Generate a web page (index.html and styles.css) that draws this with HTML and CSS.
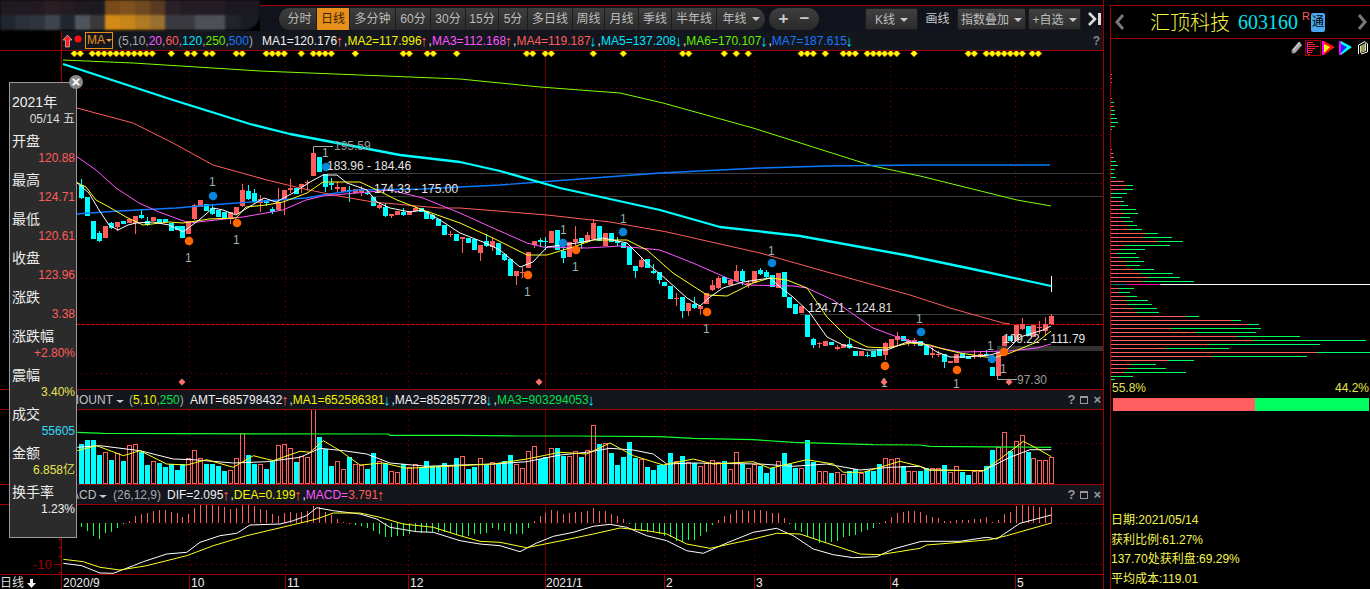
FILE: index.html
```html
<!DOCTYPE html>
<html lang="zh">
<head>
<meta charset="utf-8">
<title>汇顶科技 603160</title>
<link rel="stylesheet" href="styles.css">
</head>
<body>
<div class="app">
  <main class="main">
    <header class="toolbar">
      <div class="mosaic"></div>
      <div class="tools">
        <div class="pill">
          <span class="btn w38">分时</span><span class="btn w33 active">日线</span><span class="btn w46">多分钟</span><span class="btn w35">60分</span><span class="btn w35">30分</span><span class="btn w33">15分</span><span class="btn w29">5分</span><span class="btn w45">多日线</span><span class="btn w32">周线</span><span class="btn w34">月线</span><span class="btn w33">季线</span><span class="btn w45">半年线</span><span class="btn w48 last">年线<i class="caret"></i></span>
        </div>
        <div class="pill zoom"><span class="sym">+</span><span class="sym">−</span></div>
        <span class="square kline">K线<i class="caret"></i></span>
        <span class="plain">画线</span>
        <span class="square overlay-btn">指数叠加<i class="caret"></i></span>
        <span class="square watch">+自选<i class="caret"></i></span>
        <svg class="end-icon" width="14" height="14" viewBox="0 0 14 14"><path d="M1 1l6 6-6 6" fill="none" stroke="#ddd" stroke-width="2.6"/><rect x="10" y="1" width="3" height="12" fill="#ddd"/></svg>
      </div>
    </header>

    <div class="legend">
      <div class="legend-bar">
        <svg class="updown" width="22" height="14" viewBox="0 0 22 14"><path d="M4.500 1L9 6H6.500V13H2.500V6H0z" fill="#ff2020" stroke="#fff" stroke-width=".5"/><circle cx="15" cy="5" r="3.500" fill="#ff1010"/></svg>
        <span class="ma-box">MA<i class="caret orange"></i></span>
        <span class="t-grey params">(5,10,<b class="c-mag">20</b>,<b class="c-red">60</b>,<b class="c-cyan">120</b>,<b class="c-lime">250</b>,<b class="c-blue">500</b>)</span>
        <span class="values"><b class="c-white">MA1=120.176</b><i class="ar c-red">↑</i><b class="c-white">,</b><b class="c-yellow">MA2=117.996</b><i class="ar c-red">↑</i><b class="c-white">,</b><b class="c-mag">MA3=112.168</b><i class="ar c-red">↑</i><b class="c-white">,</b><b class="c-red">MA4=119.187</b><i class="ar c-cyan">↓</i><b class="c-white">,</b><b class="c-cyan">MA5=137.208</b><i class="ar c-cyan">↓</i><b class="c-white">,</b><b class="c-lime">MA6=170.107</b><i class="ar c-cyan">↓</i><b class="c-white">,</b><b class="c-blue">MA7=187.615</b><i class="ar c-cyan">↓</i></span>
        <span class="help">?</span>
      </div>
    </div>

    <svg id="plot-main" class="plot h338" viewBox="0 51 1103 338"></svg>

    <div class="pane-head">
      <div class="pane-bar">
        <span class="c-lgrey name">AMOUNT<i class="caret grey"></i></span>
        <span class="t-grey params2">(<b class="c-yellow">5</b>,<b class="c-yellow">10</b>,<b class="c-green">250</b>)</span>
        <span class="values"><b class="c-white">AMT=685798432</b><i class="ar c-red">↑</i><b class="c-white">,</b><b class="c-yellow">MA1=652586381</b><i class="ar c-cyan">↓</i><b class="c-white">,</b><b class="c-white">MA2=852857728</b><i class="ar c-cyan">↓</i><b class="c-white">,</b><b class="c-green">MA3=903294053</b><i class="ar c-cyan">↓</i></span>
        <span class="win"><b>?</b><i class="win-max"></i><b>×</b></span>
      </div>
    </div>
    <svg id="plot-vol" class="plot h74" viewBox="0 410 1103 74"></svg>

    <div class="pane-head">
      <div class="pane-bar">
        <span class="c-lgrey name-m">MACD<i class="caret grey"></i></span>
        <span class="t-grey params3">(26,12,9)</span>
        <span class="values"><b class="c-white">DIF=2.095</b><i class="ar c-red">↑</i><b class="c-white">,</b><b class="c-yellow">DEA=0.199</b><i class="ar c-red">↑</i><b class="c-white">,</b><b class="c-mag">MACD=</b><b class="c-red">3.791</b><i class="ar c-red">↑</i></span>
        <span class="win"><b>?</b><i class="win-max"></i><b>×</b></span>
      </div>
    </div>
    <svg id="plot-macd" class="plot h69 macd-plot" viewBox="0 505 1103 69"></svg>
    <svg id="plot-axis" class="axis" viewBox="0 574 1103 15"></svg>
  </main>

  <aside class="side">
    <div class="stock-head">
      <svg class="chev left" width="11" height="18" viewBox="0 0 11 18"><path d="M9 2L3 9l6 7" fill="none" stroke="#777" stroke-width="3"/></svg>
      <span class="stock-name">汇顶科技</span>
      <span class="stock-code">603160</span>
      <span class="stock-r">R</span>
      <span class="stock-tong">通</span>
      <svg class="chev right" width="11" height="18" viewBox="0 0 11 18"><path d="M2 2l6 7-6 7" fill="none" stroke="#777" stroke-width="3"/></svg>
    </div>
    <div class="icons">
      <svg width="12" height="13" viewBox="0 0 12 13"><path d="M1 9l7-8 3 3-7 8H1z" fill="#aaa" stroke="#777"/><path d="M2 9l7-8" stroke="#eee"/></svg>
      <svg class="ic-box" width="16" height="16" viewBox="0 0 16 16"><rect x=".5" y=".5" width="15" height="15" fill="#000" stroke="#a00000"/><path d="M2.500 2v12" stroke="#f0f"/><path d="M3 2.500h5M3 4.500h7M3 6.500h11M3 8.500h7M3 10.500h5M3 12.500h4M3 14.500h2" stroke="#f22"/></svg>
      <svg class="ic-flag" width="13" height="14" viewBox="0 0 13 14"><path d="M0 0h2v14H0z" fill="#f0f"/><path d="M2 0l11 6-11 8z" fill="#f11"/><path d="M2 3l6 3-6 6z" fill="#ff0"/></svg>
      <svg class="ic-flag2" width="13" height="14" viewBox="0 0 13 14"><path d="M0 0h2v14H0z" fill="#f0f"/><path d="M2 0l11 6-11 8z" fill="#0ff"/><path d="M2 3l6 3-6 6z" fill="#22f"/></svg>
      <svg class="ic-book" width="10" height="14" viewBox="0 0 10 14"><path d="M.5 13V4L7 .5 9.500 3v8L3 13" fill="#000" stroke="#fff"/><path d="M2 5l6-3v8l-6 2z" fill="#dd8"/><path d="M4 4v7M6 3v7" stroke="#555"/></svg>
    </div>
    <svg id="chips" class="chips" viewBox="1111 56 259 325"></svg>
    <div class="pct-row"><span>55.8%</span><span>44.2%</span></div>
    <div class="ratio"><div class="ratio-red"></div><div class="ratio-green"></div></div>
    <div class="stats">
      <div>日期:2021/05/14</div>
      <div>获利比例:61.27%</div>
      <div>137.70处获利盘:69.29%</div>
      <div>平均成本:119.01</div>
    </div>
  </aside>

  <section class="quote">
    <span class="close">×</span>
    <div class="q-year">2021年</div>
    <div class="q-date">05/14 五</div>
    <div class="q-row"><div class="q-l">开盘</div><div class="q-v c-red">120.88</div></div>
    <div class="q-row"><div class="q-l">最高</div><div class="q-v c-red">124.71</div></div>
    <div class="q-row"><div class="q-l">最低</div><div class="q-v c-red">120.61</div></div>
    <div class="q-row"><div class="q-l">收盘</div><div class="q-v c-red">123.96</div></div>
    <div class="q-row"><div class="q-l">涨跌</div><div class="q-v c-red">3.38</div></div>
    <div class="q-row"><div class="q-l">涨跌幅</div><div class="q-v c-red">+2.80%</div></div>
    <div class="q-row"><div class="q-l">震幅</div><div class="q-v c-y2">3.40%</div></div>
    <div class="q-row"><div class="q-l">成交</div><div class="q-v c-c2">55605</div></div>
    <div class="q-row"><div class="q-l">金额</div><div class="q-v c-y2">6.858亿</div></div>
    <div class="q-row"><div class="q-l">换手率</div><div class="q-v c-white">1.23%</div></div>
  </section>
</div>
<script src="chart.js"></script>
</body>
</html>
```

FILE: styles.css
```css
* { box-sizing: border-box; }
html, body { margin: 0; padding: 0; background: #000; }
.app {
  position: relative; display: flex; width: 1370px; height: 589px; overflow: hidden; background: #000;
  font: 12px "Liberation Sans", "Noto Sans CJK SC", sans-serif; color: #ddd;
}
b { font-weight: 400; }
i { font-style: normal; }
.main { flex: 0 0 1104px; display: flex; flex-direction: column; border-right: 1px solid #a00000; height: 589px; }
.toolbar { display: flex; height: 31px; flex: none; }
.mosaic {
  flex: 0 0 260px; height: 30px; border-radius: 0 0 16px 0; filter: blur(.8px);
  background:
    linear-gradient(to right,#1f1a20 0 15px,#201a22 15px 30px,#221a20 30px 45px,#2a1e24 45px 60px,#241c20 60px 75px,#1e1a20 75px 90px,#1c1a20 90px 105px,#7b4a1a 105px 120px,#80511c 120px 135px,#6f4a20 135px 150px,#5a3a20 150px 165px,#2a2028 165px 180px,#241c24 180px 225px,#1c1820 225px 260px) top/100% 50% no-repeat,
    linear-gradient(to right,#20262e 0 15px,#2c3038 15px 30px,#30343c 30px 45px,#40444c 45px 60px,#22262e 60px 75px,#50545c 75px 90px,#3a3a3a 90px 105px,#d48a18 105px 120px,#c8861a 120px 135px,#b07a22 135px 150px,#9a7030 150px 165px,#3a3a40 165px 195px,#4e5058 195px 225px,#22242c 225px 240px,#1a1c24 240px 260px) bottom/100% 50% no-repeat;
}
.tools {
  flex: 1; margin-top: 5px; border-top: 1px solid #a00000; background: #10131c;
  display: flex; align-items: flex-start; padding: 2px 0 0 19px; height: 26px;
}
.pill {
  display: flex; height: 22px; border-radius: 11px; overflow: hidden;
  background: linear-gradient(#3e3e3e, #2a2a2a); color: #bdbdbd; line-height: 22px; flex: none;
}
.btn { display: block; text-align: center; border-right: 1px solid #1c1c1c; flex: none; }
.btn.last { border-right: 0; }
.w29 { width: 29px; } .w32 { width: 32px; } .w33 { width: 33px; } .w34 { width: 34px; }
.w35 { width: 35px; } .w38 { width: 38px; padding-left: 4px; } .w45 { width: 45px; } .w46 { width: 46px; } .w48 { width: 48px; }
.btn.active { background: #e8901a; color: #3a2400; }
.zoom { width: 50px; margin-left: 4px; justify-content: space-around; padding: 0 4px; }
.sym { font-size: 17px; font-weight: 700; color: #ccc; }
.caret {
  display: inline-block; width: 0; height: 0; margin-left: 5px; vertical-align: 2px;
  border: 4px solid transparent; border-top-color: #c8c8c8; border-bottom-width: 0;
}
.caret.orange { border-width: 3px 3px 0; border-top-color: #f0a030; margin-left: 1px; }
.caret.grey { margin-left: 3px; vertical-align: 1px; border-width: 3px 4px 0; border-top-color: #ccc; }
.square {
  display: block; height: 22px; line-height: 22px; text-align: center; color: #bdbdbd; flex: none;
  background: linear-gradient(#404040, #2c2c2c); border: 1px solid #1c1c1c; border-radius: 2px;
}
.kline { width: 53px; margin-left: 46px; }
.plain { width: 39px; text-align: center; line-height: 22px; color: #ccc; flex: none; }
.overlay-btn { width: 69px; }
.watch { width: 53px; margin-left: 2px; }
.end-icon { margin: 4px 0 0 7px; flex: none; }

.legend, .pane-head { height: 20px; flex: none; border-bottom: 1px solid #a00000; padding-left: 61px; }
.legend-bar, .pane-bar { display: flex; align-items: center; height: 19px; background: #14161d; white-space: nowrap; }
.legend-bar { border-left: 1px solid #a00000; }
.updown { margin-left: 1px; flex: none; }
.ma-box {
  margin-left: 0; width: 28px; height: 17px; line-height: 15px; border: 1px solid #e8901a; color: #e8901a;
  padding-left: 1px; flex: none; white-space: nowrap; overflow: hidden;
}
.params { margin-left: 5px; width: 144px; flex: none; }
.values { flex: none; }
.ar { display: inline-block; width: 7px; font-size: 15px; line-height: 12px; text-align: center; vertical-align: -1px; text-indent: -2px; }
.help { margin-left: auto; margin-right: 3px; color: #888; font-weight: 700; }
.t-grey { color: #a8a8a8; }
.name { width: 68px; flex: none; }
.name-m { width: 52px; flex: none; }
.params2 { width: 61px; flex: none; }
.params3 { width: 54px; flex: none; }
.win { margin-left: auto; display: flex; align-items: center; gap: 5px; padding-right: 2px; color: #999; font-weight: 700; }
.win b { font-weight: 700; font-size: 13px; line-height: 13px; }
.win-max { display: block; width: 8px; height: 8px; border: 1px solid #999; border-top-width: 2px; }

.plot { display: block; flex: none; width: 1103px; }
.h338 { height: 338px; border-bottom: 0; margin-bottom: 1px; }
.h74 { height: 74px; margin-bottom: 1px; }
.h69 { height: 69px; }
.axis { display: block; flex: none; width: 1103px; height: 15px; }
.h338, .h74 { box-shadow: 0 1px 0 #a00000; }

.c-white { color: #f0f0f0; } .c-yellow { color: #f4f400; } .c-mag { color: #ff55ff; } .c-red { color: #ff5c5c; }
.c-cyan { color: #00e4ff; } .c-lime { color: #60f000; } .c-blue { color: #1478ff; } .c-green { color: #00e050; }
.c-lgrey { color: #c0c0c0; } .c-y2 { color: #e4e450; } .c-c2 { color: #30d8ff; }

.side { flex: 0 0 260px; margin: 5px 0 0 6px; height: 584px; border-top: 1px solid #a00000; border-left: 1px solid #a00000; display: flex; flex-direction: column; }
.stock-head { position: relative; flex: none; height: 33px; border-bottom: 1px solid #a00000; display: flex; align-items: center; }
.chev { flex: none; }
.chev.left { margin-left: 3px; }
.chev.right { margin-left: 32px; }
.stock-name { margin-left: 25px; width: 88px; font: 300 20px "Noto Sans CJK SC", sans-serif; color: #f6f640; flex: none; line-height: 32px; }
.stock-code { font: 20px "Liberation Serif", serif; color: #00e0f0; flex: none; }
.stock-r { margin: -12px 0 0 4px; color: #ff5c5c; font-size: 11px; flex: none; }
.stock-tong {
  width: 14px; height: 19px; line-height: 19px; text-align: center; background: #4aa8f0; color: #000; border-radius: 2px;
  font-size: 12px; flex: none; margin: 0 0 0 1px; overflow: hidden;
}
.icons { flex: none; height: 17px; display: flex; align-items: center; justify-content: flex-end; padding: 0 2px 0 0; }
.icons svg { flex: none; }
.ic-box { margin-left: 2px; }
.ic-flag { margin-left: 1px; }
.ic-flag2 { margin-left: 4px; }
.ic-book { margin-left: 6px; }
.chips { display: block; flex: none; width: 259px; height: 325px; }
.pct-row { flex: none; display: flex; justify-content: space-between; height: 15px; line-height: 15px; color: #e4e450; padding: 0 1px; }
.ratio { flex: none; display: flex; height: 13px; margin: 2px 0 0 2px; width: 256px; }
.ratio-red { width: 142px; background: #ff5f5f; }
.ratio-green { flex: 1; background: #00ff60; }
.stats { margin-top: auto; color: #f4f450; line-height: 19.5px; white-space: nowrap; }

.quote {
  position: absolute; left: 9px; top: 82px; width: 68px; height: 456px; padding: 10px 1px 0 2px;
  background: #2b2b2b; border: 1px solid #9a9a9a;
}
.close {
  position: absolute; right: -7px; top: -8px; width: 14px; height: 14px; border-radius: 50%; background: #888;
  color: #fff; text-align: center; line-height: 13px; font-size: 15px; font-weight: 700;
}
.q-year { font-size: 14px; line-height: 18px; color: #eee; }
.q-date { text-align: right; line-height: 17px; font-size: 12px; color: #ddd; margin-bottom: 4px; }
.q-row { height: 39px; }
.q-l { font-size: 14px; line-height: 19px; color: #eee; }
.q-v { text-align: right; line-height: 14px; font-size: 12px; white-space: nowrap; }

.grid { stroke: #8a0000; stroke-width: 1; stroke-dasharray: 1 4; fill: none; }
.solid { stroke: #6a0000; stroke-width: 1; fill: none; }
.ref { stroke: #3c3c3c; stroke-width: 1; }
.refbar { fill: #333; }
.close-line { stroke: #e00000; stroke-dasharray: 4 1; stroke-width: 1; }
.axis-line { stroke: #a00000; stroke-width: 1; }
.up { fill: #ff5c5c; } .dn { fill: #00ffff; }
.wick-up { stroke: #ff5c5c; } .wick-dn { stroke: #00ffff; }
.ln { fill: none; stroke-width: 1; stroke-linejoin: round; }
.ln-w { stroke: #fff; } .ln-y { stroke: #ffff20; } .ln-m { stroke: #ff55ff; } .ln-r { stroke: #ff5c5c; }
.ln-c { stroke: #00ffff; stroke-width: 2.3; } .ln-l { stroke: #80ff00; } .ln-b { stroke: #0a78ff; stroke-width: 1.4; } .ln-g { stroke: #10ff30; stroke-width: 1.2; }
.vol-up { fill: none; stroke: #ff5c5c; } .vol-dn { fill: #00ffff; }
.macd-up { stroke: #ff5c5c; } .macd-dn { stroke: #10ff50; }
.dia { fill: #ffff00; stroke: #c86000; stroke-width: .6; }
.dia-r { fill: #ff7070; }
.dot-b { fill: #0a84d8; } .dot-o { fill: #ff6600; }
.mk { fill: #9ab4b4; font: 12px "Liberation Sans", sans-serif; }
.tag { fill: #e4e4e4; font: 12px "Liberation Sans", sans-serif; }
.tag-g { fill: #9a9a9a; font: 12px "Liberation Sans", sans-serif; }
.brk { stroke: #a8a8a8; fill: none; }
.end-mark { stroke: #fff; }
.neg { fill: #a00000; font: 13px "Liberation Sans", sans-serif; }
.ax { fill: #eee; font: 12px "Liberation Sans", sans-serif; }
.ax-cn { fill: #ddd; font: 12px "Noto Sans CJK SC", sans-serif; }
.chip-r { stroke: #ff5c5c; } .chip-g { stroke: #00ff60; }
.chip-t { stroke: #087070; } .chip-m { stroke: #ff0090; } .chip-w { stroke: #fff; }
```

FILE: chart.js
```js
var V1=[[244,'c',165],[262,'c',153],[280,'c',153],[298,'c',198],[316,'r',190],[334,'c',213],[352,'r',192],[370,'c',216],[388,'r',168],[406,'r',165],[424,'c',190],[442,'c',228],[460,'r',216],[478,'c',222],[496,'c',233],[514,'c',226],[530,'c',242],[548,'c',226],[566,'r',208],[584,'r',184],[602,'r',208],[620,'c',225],[638,'c',225],[656,'c',230],[674,'c',245],[692,'r',243],[710,'r',208],[728,'r',133],[746,'c',198],[764,'c',225],[782,'r',226],[800,'c',240],[818,'c',215],[836,'r',168],[854,'r',165],[872,'r',178],[890,'c',218],[908,'r',200],[926,'r',203],[942,'r',60],[960,'c',145],[978,'c',180],[996,'c',231],[1014,'r',216],[1032,'r',240],[1050,'c',204],[1068,'r',225],[1086,'r',228],[1104,'c',240],[1122,'c',192],[1140,'r',215],[1158,'c',222],[1176,'r',246],[1194,'r',249],[1212,'c',225],[1230,'r',235],[1248,'r',226],[1262,'c',233],[1280,'c',215],[1298,'c',231],[1316,'c',231],[1334,'c',222],[1352,'r',228],[1370,'c',207]];
var V2=['r202','c240','c233','r208','c225','r220','c225','c215','c198','r225','r238','r187','r172','c210','c205','r178','c177','c200','r200','r187','c204','r184','r108','c165','r163','c192','c228','c204','c159','c208','r210','c234','c243','c228','c228','c192','r215','c201','r220','c222','r232','r223','r214','r220','c217','r240','r190','c225','r238','r224','c232','c252','c238','r217','c192','c226','c238','r238','c153','c220','r247','r247','c253','r249','r256','c246','c240','r252','c246','c245','c225','r208','r211','r208','c232','r247',
'r247','c246','c238','r238','r238','c228','r250','r232','c250','c258','r247','r247','c232','c183','r175','r130','c185','r157','r138','c188','r207','r213','r213','r203'];
var vols=V1.map(function(a){return {t:a[1],y:389+a[2]/3};}).concat(V2.map(function(s){return {t:s[0],y:389+(+s.slice(1))/3};}));
var C=[[185,198,179],[197,216],[221,239],[233,241,231],[226,238],[223,228,222],[222,227,222,230],[221,224],[219,223],[216,223,216,233],[215,218,209],[221,225,217],[217,221],[219,223],[219,222],[223,231],[226,230],[226,238],[221,234],[205,219,204],[200,207],[204,211],[208,214,204],[210,217],[212,219],[212,219,212,223],[207,214],[190,206,184],[191,199,185],[193,202,189],[199,203,195,211],[200,203,200,205],[209,212,207,213],[202,210,188],[190,199,190,214],[188,190,179,192],[188,194],[184,187,184,192],[182,183,180,190],[153,176],[157,172],[174,187,174,191],[183,185,178,189],[187,189,182,191],[187,192],[190,191,186,201],[189,193],[189,192,186,195],[193,194,189],[197,206],[205,208,202],[207,216,203],[214,216,214,217],[211,215],[212,215,208],[211,215],[208,211,206],[208,212],[211,219],[215,219,214],[219,226],[225,235],[234,235,231,236],[234,241],[237,239,237,252],[238,243],[239,250],[245,253,245,260],[241,246,234],[241,247,238,250],[243,255],[254,260,253],[259,276],[271,276,271,284],[272,273,267,277],[252,268],[241,245,241,247],[240,242,238,245],[241,242,237,249],[231,243],[230,250],[251,258,248,262],[242,257],[239,242,226,249],[238,243,238,248],[235,242,232],[223,239,219],[226,241],[233,246],[233,242],[241,243,237,245],[243,248],[247,265],[266,271,266,277],[260,267,257],[259,268],[271,273,264],[272,280,272,283],[282,286],[286,299],[298,299,293,305],[297,311,297,317],[303,311,303,315],[304,308,297],[306,309,306,314],[293,304],[285,290,280],[278,288,276],[277,283,276],[280,285],[271,281,265],[271,281,269,284],[283,285,280,287],[271,283],[270,274,268],[272,277,270],[275,287],[273,288],[272,297],[297,308],[304,314],[306,313],[315,337],[339,345,338,347],[343,344,342,347],[341,346],[342,345],[347,349,345],[344,348],[344,348,339],[351,356],[351,356],[355,356,352],[351,357],[349,356],[343,355,342,359],[339,348],[336,340,332,345],[336,341],[340,343,339,345],[340,343,338,345],[341,346],[345,355],[353,355,347,357],[354,355,351,356],[354,362,354,367],[361,363],[354,363],[353,358],[356,359],[355,356,350,358],[354,357,351],[354,355,350],[367,376],[352,376],[336,346],[336,341],[325,341],[324,329,318],[326,336],[325,337],[327,328,321,333],[324,331,317,335],[316,324,314]];
function X(i){return Math.round(81.3+5.951*i);}
function pl(pts,cls){return '<polyline class="ln '+cls+'" points="'+pts.map(function(p){return p[0]+','+p[1];}).join(' ')+'"/>';}
function zp(ox,oy,a){return a.map(function(p){return [+(ox+p[0]/3).toFixed(1),+(oy+p[1]/3).toFixed(1)];});}
function hline(y,x1,x2,cls){return '<line class="'+cls+'" x1="'+x1+'" x2="'+x2+'" y1="'+(y+.5)+'" y2="'+(y+.5)+'"/>';}
function vline(x,y1,y2,cls){return '<line class="'+cls+'" x1="'+(x+.5)+'" x2="'+(x+.5)+'" y1="'+y1+'" y2="'+y2+'"/>';}
var months=[189,285,408,545,664,754,890,1015];
function verticals(y1,y2){var s=vline(61,y1,y2,'axis-line');months.forEach(function(x){s+=vline(x,y1,y2,x===545?'solid':'grid');});return s;}
function txt(x,y,t,cls){return '<text class="'+cls+'" x="'+x+'" y="'+y+'">'+t+'</text>';}

/* main */
var s=verticals(51,389);
[88,135,183,230,278,373].forEach(function(y){s+=hline(y,61,1103,'grid');});
s+=hline(173,327,1103,'ref')+hline(196,370,1103,'ref')+hline(314,800,1103,'ref');
s+='<rect class="refbar" x="997" y="346" width="106" height="5"/>';
s+=hline(324,61,1103,'close-line');
[223,241,277,295,313,331,349,367,385,403,421,439,457,514,562,583,619,637,709,727,799,817,835,853,904,940,958,976,994,1066,1210,1228,1282,1300].forEach(function(z){var x=z/3;s+='<path class="dia" d="M'+x+' 50l3.500 3.500-3.500 3.500-3.500-3.500z"/>';});
[1370].concat([]).forEach(function(z){var x=z/3;s+='<path class="dia" d="M'+x+' 50l3.500 3.500-3.500 3.500-3.500-3.500z"/>';});
[200,218,256,274,400,490,668,686,793,829,865,1024,1042,1060,1096,1150,1168,1186,1222,1240,1258,1274,1292,1310,1362].forEach(function(z){var x=460+z/3;s+='<path class="dia" d="M'+x+' 50l3.500 3.500-3.500 3.500-3.500-3.500z"/>';});
[175,193,229,247,265,283,301,319,337,367,385].forEach(function(z){var x=910+z/3;s+='<path class="dia" d="M'+x+' 50l3.500 3.500-3.500 3.500-3.500-3.500z"/>';});
C.forEach(function(c,i){
  var x=X(i),u=vols[i].t==='r',h=c[2]||c[0],l=c[3]||c[1];
  if(h<c[0]||l>c[1])s+=vline(x,h,l+1,u?'wick-up':'wick-dn');
  s+='<rect class="'+(u?'up':'dn')+'" x="'+(x-2)+'" y="'+c[0]+'" width="5" height="'+Math.max(1,c[1]-c[0])+'"/>';
});
s+=pl([[63,60],[133,63],[260,71],[460,79],[540,87],[620,93],[663,103],[753,128],[873,166],[920,176],[1017,200],[1051,206]],'ln-l');
s+=pl([[76,214],[119,211],[176,208],[223,204],[306,198],[323,195],[357,190],[423,189],[460,187],[500,185],[540,182],[660,173],[760,168],[827,166],[920,165],[1050,165]],'ln-b');
s+=pl([[77,108],[133,123],[173,143],[213,165],[267,180],[300,188],[333,195],[373,202],[440,208],[460,208],[547,215],[610,222],[667,232],[760,253],[827,272],[910,295],[950,308],[1003,323],[1010,324]],'ln-r');
s+=pl([[76,156],[96,170],[116,188],[139,203],[159,212],[189,223],[216,220],[243,217],[283,210],[306,200],[323,196],[357,193],[390,190],[423,198],[460,213],[493,228],[527,243],[543,247],[587,248],[620,246],[660,250],[693,263],[727,278],[747,285],[793,286],[807,288],[833,300],[873,328],[900,338],[930,346],[960,352],[1010,351],[1037,348],[1051,344]],'ln-m');
s+=pl([[76,182],[86,187],[96,200],[109,207],[126,217],[143,225],[169,222],[183,223],[209,219],[236,218],[246,207],[266,205],[283,202],[307,193],[323,182],[360,182],[377,190],[397,200],[423,210],[460,223],[493,238],[527,255],[547,255],[573,247],[593,240],[627,240],[647,250],[673,273],[707,295],[727,296],[753,283],[770,278],[787,280],[807,288],[827,317],[847,337],[867,347],[887,348],[910,343],[930,345],[943,349],[960,353],[993,358],[1010,353],[1037,342],[1051,331]],'ln-y');
s+=pl([[76,182],[89,193],[99,210],[109,225],[118,230],[128,225],[136,223],[153,222],[169,225],[183,232],[199,220],[213,208],[223,210],[236,215],[249,207],[264,198],[276,202],[293,193],[310,182],[323,175],[337,175],[347,183],[367,190],[377,202],[390,208],[410,212],[423,210],[440,220],[460,233],[483,242],[500,250],[520,267],[533,262],[547,247],[577,243],[603,238],[627,243],[647,263],[667,280],[687,298],[700,306],[710,297],[723,288],[743,282],[770,278],[780,287],[793,297],[810,313],[827,337],[843,345],[867,350],[887,350],[907,342],[923,343],[937,352],[950,357],[967,357],[990,355],[1007,350],[1020,337],[1043,330],[1051,326]],'ln-w');
s+=pl([[63,64],[173,100],[250,124],[290,134],[400,155],[460,162],[500,171],[560,188],[610,199],[660,210],[720,227],[800,236],[910,256],[977,270],[1051,286]],'ln-c');
s+=vline(1051,276,292,'end-mark');
[[213,196,212,186],[326,167,325,157],[563,243,563,234],[623,232,623,223],[772,263,771,255],[921,332,919,323],[992,359,990,350]].forEach(function(d){s+='<circle class="dot-b" cx="'+d[0]+'" cy="'+d[1]+'" r="4.300"/>'+txt(d[2]-3,d[3],'1','mk');});
[[189,241,188,262],[237,223,236,244],[528,275,527,296],[576,250,575,271],[707,312,706,333],[885,366,884,387],[957,370,956,388],[1004,352,1003,373]].forEach(function(d){s+='<circle class="dot-o" cx="'+d[0]+'" cy="'+d[1]+'" r="4.300"/>'+txt(d[2]-3,d[3],'1','mk');});
[[182,382],[539,382],[884,382],[1009,382]].forEach(function(d){s+='<path class="dia-r" d="M'+d[0]+' '+(d[1]-3.5)+'l3.500 3.500-3.500 3.500-3.500-3.500z"/>';});
s+='<path class="brk" d="M313.500 153V146.500H333"/>'+txt(334,150,'195.59','tag-g');
s+=txt(327,170,'183.96 - 184.46','tag');
s+=txt(374,193,'174.33 - 175.00','tag');
s+=txt(808,312,'124.71 - 124.81','tag');
s+=txt(1003,343,'109.22 - 111.79','tag');
s+='<path class="brk" d="M997.500 370V379.500H1017"/>'+txt(1017,384,'97.30','tag-g');
document.getElementById('plot-main').innerHTML=s;

/* volume */
s=verticals(410,484)+hline(443,61,1103,'grid');
vols.forEach(function(v,i){
  var x=X(i),y=Math.round(v.y);
  if(v.t==='r')s+='<rect class="vol-up" x="'+(x-1.5)+'" y="'+(y+.5)+'" width="4" height="'+(483-y)+'"/>';
  else s+='<rect class="vol-dn" x="'+(x-2)+'" y="'+y+'" width="5" height="'+(484-y)+'"/>';
});
s+=pl(zp(0,389,[[232,130],[310,133],[540,134],[1165,135],[1170,139],[1380,139]]).concat(zp(460,389,[[180,141],[340,141],[600,143],[700,148],[880,152],[1000,160],[1240,167],[1380,168]]),zp(910,389,[[60,172],[424,175]])),'ln-g');
s+=pl(zp(0,389,[[232,175],[300,170],[420,185],[520,210],[580,212],[700,222],[800,218],[900,205],[960,178],[1030,185],[1100,195],[1170,222],[1280,232],[1380,228]]).concat(zp(460,389,[[100,225],[200,218],[300,198],[380,190],[450,178],[520,183],[580,195],[620,225],[700,222],[900,225],[1000,232],[1100,225],[1200,243],[1290,235],[1380,232]]),zp(910,389,[[60,243],[220,245],[300,205],[360,182],[424,182]])),'ln-w');
s+=pl(zp(0,389,[[232,185],[290,170],[370,200],[420,185],[500,225],[560,228],[620,212],[700,235],[760,200],[820,215],[900,187],[930,190],[970,155],[1020,185],[1080,228],[1150,222],[1220,238],[1380,230]]).concat(zp(460,389,[[100,225],[200,210],[300,190],[380,195],[450,162],[520,200],[610,228],[700,210],[760,225],[880,218],[930,238],[1040,212],[1120,225],[1150,250],[1210,250],[1320,217],[1380,232]]),zp(910,389,[[50,243],[220,245],[270,210],[340,157],[380,178],[424,203]])),'ln-y');
document.getElementById('plot-vol').innerHTML=s;

/* macd */
var H=[415,425,442,450,432,430,418,406,395,380,375,372,365,363,362,370,373,385,375,357,346,346,348,352,354,360,358,346,346,350,360,363,375,380,372,368,372,368,366,352,354,370,378,390,398,403,408,410,418,425,435,445,445,440,440,435,430,432,430,430,430,430,432,438,
440,440,436,436,433,418,424,426,436,436,434,416,397,380,372,362,365,375,372,370,368,366,358,365,367,376,380,390,406,422,427,430,430,436,440,444,455,460,453,452,442,428,408,392,380,374,364,362,365,363,363,365,372,372,388,404,422,430,440,450,462,462,458,455,445,440,438,428,424,416,406,396,385,372,370,366,
366,368,378,385,388,396,395,393,392,392,390,390,385,398,392,375,368,352,348,352,352,355,358,353];
s=verticals(505,574)+hline(523,61,1103,'grid')+hline(564,61,1103,'grid');
H.forEach(function(z,i){
  var y=Math.round(389+z/3),x=X(i);
  if(y<523)s+=vline(x,y,523,'macd-up');else if(y>523)s+=vline(x,523,y,'macd-dn');else s+=vline(x,523,524,'macd-up');
});
s+=pl(zp(0,389,[[190,523],[245,530],[300,552],[340,553],[400,530],[430,518],[500,495],[560,490],[600,460],[660,440],[710,433],[750,408],[840,405],[880,395],[920,380],[950,356],[1000,365],[1080,375],[1130,390],[1170,415],[1250,428],[1300,430],[1380,455]]).concat(zp(460,389,[[60,465],[120,470],[180,488],[230,462],[280,442],[340,430],[400,412],[450,406],[500,415],[560,440],[620,455],[680,485],[730,493],[800,462],[880,430],[950,418],[1000,440],[1060,480],[1120,497],[1180,506],[1250,503],[1300,480],[1380,458]]),zp(910,389,[[40,457],[150,457],[230,445],[260,450],[330,403],[424,378]])),'ln-w');
s+=pl(zp(0,389,[[190,511],[250,518],[300,535],[360,543],[440,530],[560,500],[640,470],[740,440],[880,407],[950,390],[1000,372],[1080,372],[1140,385],[1210,405],[1300,415],[1380,440]]).concat(zp(460,389,[[60,457],[120,460],[200,476],[300,456],[400,435],[480,417],[560,425],[620,435],[680,465],[750,478],[880,450],[950,433],[1020,435],[1100,462],[1200,495],[1260,497],[1380,478]]),zp(910,389,[[50,468],[150,460],[240,452],[290,440],[424,402]])),'ln-y');
[539,547,556,564,572].forEach(function(y){s+=hline(y,y===564?54:58,61,'axis-line');});
s+=txt(33,569,'-10','neg');
document.getElementById('plot-macd').innerHTML=s;

/* axis */
s=hline(574,0,1103,'axis-line')+vline(61,575,589,'axis-line');
months.forEach(function(x){s+=vline(x,575,589,'axis-line');});
s+=txt(0,587,'日线','ax-cn')+'<path class="ax" d="M30 579h3v4h3l-4.500 5-4.500-5h3z"/>';
[[63,'2020/9'],[191,'10'],[287,'11'],[410,'12'],[546,'2021/1'],[666,'2'],[756,'3'],[892,'4'],[1017,'5']].forEach(function(m){s+=txt(m[0],587,m[1],'ax');});
document.getElementById('plot-axis').innerHTML=s;

/* chips: [zoomY, redEnd, greenEnd] in zoom coordinates */
var up=[[222,606,606],[234,606,606],[246,606,606],[295,606,606],[307,603,612],[319,612,612],[331,603,615],[343,603,615],[355,603,621],[367,603,624],[379,603,615],[388,603,606],[448,606,606],[460,610,610],[472,612,612],[484,603,618],[496,603,624],[508,603,615],[520,603,612],[532,603,618],[544,642,642],[556,651,669],[568,642,669],[580,603,651],[592,603,636]];
var lo=[[4,633,642],[16,632,654],[28,630,678],[40,642,684],[52,630,660],[64,642,669],[76,654,681],[88,660,696],[100,708,744],[112,702,786],[124,741,819],[136,645,780],[148,633,705],[160,621,678],[172,627,687],[184,648,702],[196,648,690],[208,672,732],[220,693,789],[232,714,810],[244,699,852],[265,627,672],[277,627,660],[289,651,681],[301,648,714],[313,654,726],[325,672,741],[337,681,747],[349,828,867],[361,966,993],[373,1014,1047],[385,783,1053],[397,858,1038],[409,981,1170],[421,1029,1368],[433,897,1230],[445,768,957],[457,1221,1380],[469,909,1191],[481,774,852],[493,663,738],[505,654,768],[517,642,828],[529,603,669],[538,603,615]];
s='';
function chip(a,oy){a.forEach(function(r){
  var y=Math.floor(oy+r[0]/3),x1=910+r[1]/3,x2=910+r[2]/3;
  if(r[1]>603)s+=hline(y,1111,x1,'chip-r');
  if(r[2]>r[1])s+=hline(y,x1,x2,'chip-g');
});}
chip(up,0);chip(lo,200);
s+='<g>'+hline(284,1111,1127,'chip-t')+hline(284,1127,1160,'chip-m')+hline(284,1160,1370,'chip-w')+'</g>';
document.getElementById('chips').innerHTML=s;
```
